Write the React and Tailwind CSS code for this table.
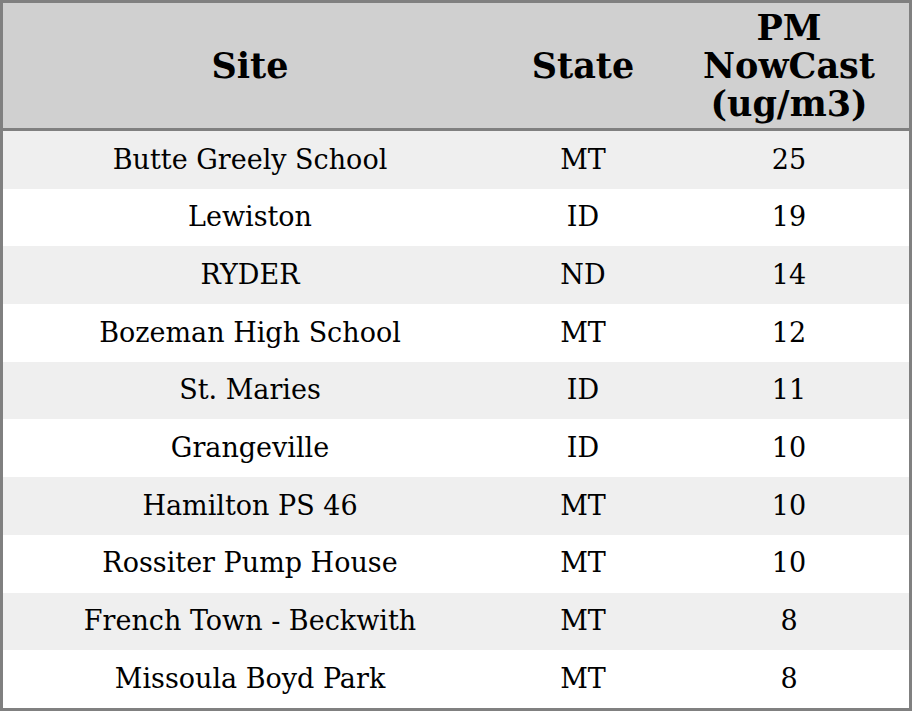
import React from "react";

const rows = [
  { site: "Butte Greely School", state: "MT", pm: 25 },
  { site: "Lewiston", state: "ID", pm: 19 },
  { site: "RYDER", state: "ND", pm: 14 },
  { site: "Bozeman High School", state: "MT", pm: 12 },
  { site: "St. Maries", state: "ID", pm: 11 },
  { site: "Grangeville", state: "ID", pm: 10 },
  { site: "Hamilton PS 46", state: "MT", pm: 10 },
  { site: "Rossiter Pump House", state: "MT", pm: 10 },
  { site: "French Town - Beckwith", state: "MT", pm: 8 },
  { site: "Missoula Boyd Park", state: "MT", pm: 8 },
];

export default function App() {
  return (
    <div className="w-[912px] h-[711px] bg-white font-['DejaVu_Serif',serif] text-black">
      <div className="border-[3px] border-[#808080] flex flex-col">
        {/* header */}
        <div className="grid grid-cols-[494px_172px_240px] h-[128px] bg-[#d0d0d0] border-b-[3px] border-[#808080] text-[35px] font-bold leading-[38px] text-center">
          <div className="flex items-center justify-center">Site</div>
          <div className="flex items-center justify-center">State</div>
          <div className="flex items-center justify-center">
            <span>
              PM
              <br />
              NowCast
              <br />
              (ug/m3)
            </span>
          </div>
        </div>

        {/* rows */}
        {rows.map((r, i) => (
          <div
            key={i}
            className={
              "grid grid-cols-[494px_172px_240px] h-[57.7px] text-[27px] text-center items-center " +
              (i % 2 === 0 ? "bg-[#efefef]" : "bg-white")
            }
          >
            <div>{r.site}</div>
            <div>{r.state}</div>
            <div>{r.pm}</div>
          </div>
        ))}
      </div>
    </div>
  );
}
